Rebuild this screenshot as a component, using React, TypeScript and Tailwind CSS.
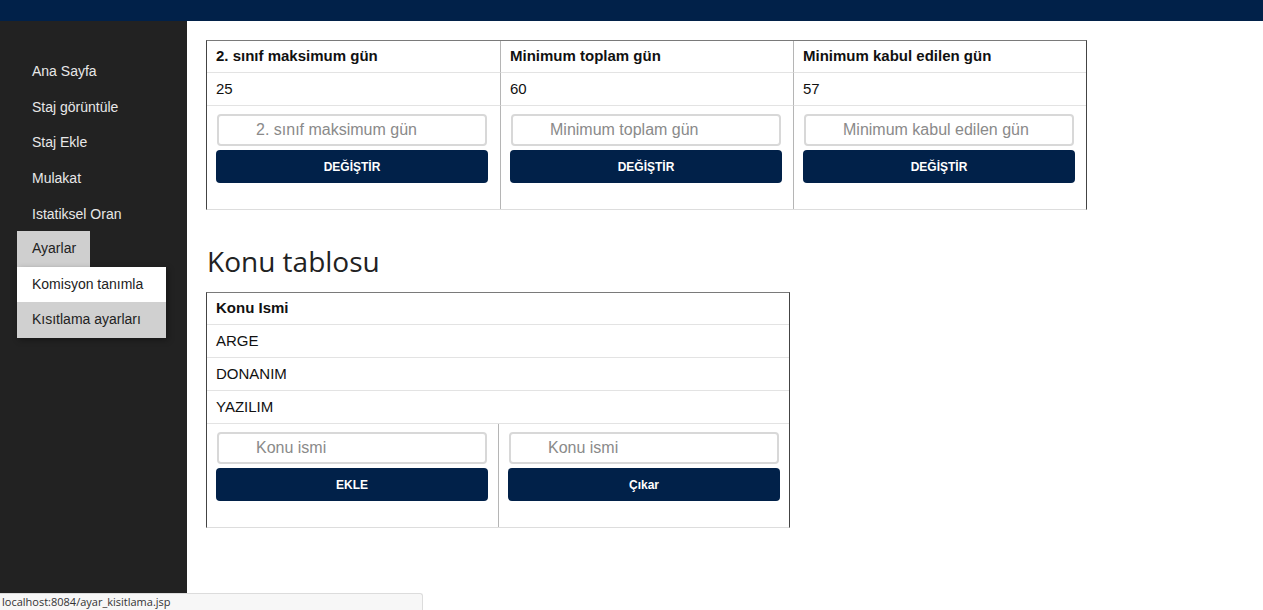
import React from 'react';

const menu = ['Ana Sayfa', 'Staj görüntüle', 'Staj Ekle', 'Mulakat', 'Istatiksel Oran'];

const limits = [
  { title: '2. sınıf maksimum gün', value: '25' },
  { title: 'Minimum toplam gün', value: '60' },
  { title: 'Minimum kabul edilen gün', value: '57' },
];

const topics = ['ARGE', 'DONANIM', 'YAZILIM'];

const FormCell = ({ placeholder, label, last }: { placeholder: string; label: string; last?: boolean }) => (
  <div className={`pl-[9px] pt-[8px] pb-[26px] ${last ? '' : 'border-r border-[#b5b5b5]'}`}>
    <input
      placeholder={placeholder}
      className="block w-[270px] h-[32px] ml-px border-2 border-[#d8d8d8] rounded-[4px] pl-[37px] font-['Liberation_Sans',Arial,sans-serif] text-[16px] text-[#333] placeholder:text-[#8a8a8a] outline-none"
    />
    <button className="mt-[4px] w-[272px] h-[33px] bg-[#012149] rounded-[4px] text-white font-['Liberation_Sans',Arial,sans-serif] text-[12px] font-bold">
      {label}
    </button>
  </div>
);

const App = () => {
  return (
    <div className="h-[610px] flex flex-col bg-white overflow-hidden relative font-['Liberation_Sans',Arial,sans-serif]">
      <div className="h-[21px] bg-[#012149] shrink-0" />

      <div className="flex flex-1">
        {/* Sidebar */}
        <aside className="w-[187px] bg-[#222222] pt-[33px] shrink-0">
          {menu.map((m) => (
            <div key={m} className="h-[35.6px] flex items-center pl-[32px] text-[14px] text-[#e8e8e8]">
              {m}
            </div>
          ))}
          <div className="ml-[17px] -mt-px">
            <div className="w-[73px] h-[36px] bg-[#cfcfcf] flex items-center pl-[15px] text-[14px] text-[#222]">Ayarlar</div>
            <div className="w-[149px] shadow-[2px_2px_6px_rgba(0,0,0,0.35)]">
              <div className="h-[35px] bg-white flex items-center pl-[15px] text-[14px] text-[#222]">Komisyon tanımla</div>
              <div className="h-[36px] bg-[#d0d0d0] flex items-center pl-[15px] text-[14px] text-[#222]">Kısıtlama ayarları</div>
            </div>
          </div>
        </aside>

        {/* Content */}
        <main className="flex-1 pl-[19px] pt-[19px]">
          <div className="w-[881px] border-t border-t-[#7a7a7a] border-x border-x-[#444] border-b border-b-[#ddd]">
            <div className="grid grid-cols-[294px_293px_1fr] text-[15px] text-[#111]">
              {limits.map((l, i) => (
                <div key={l.title} className={`h-[32px] flex items-center pl-[9px] font-bold border-b border-b-[#e3e3e3] ${i < 2 ? 'border-r border-r-[#b5b5b5]' : ''}`}>
                  {l.title}
                </div>
              ))}
              {limits.map((l, i) => (
                <div key={l.value} className={`h-[33px] flex items-center pl-[9px] border-b border-b-[#e3e3e3] ${i < 2 ? 'border-r border-r-[#b5b5b5]' : ''}`}>
                  {l.value}
                </div>
              ))}
              {limits.map((l, i) => (
                <FormCell key={l.title + 'f'} placeholder={l.title} label="DEĞİŞTİR" last={i === 2} />
              ))}
            </div>
          </div>

          <h2 className="mt-[33px] mb-[13px] text-[28px] leading-[36px] text-[#222] pl-px font-['Open_Sans','Noto_Sans',sans-serif]">
            Konu tablosu
          </h2>

          <div className="w-[584px] border-t border-t-[#7a7a7a] border-x border-x-[#444] border-b border-b-[#ddd] text-[15px] text-[#111]">
            <div className="h-[32px] flex items-center pl-[9px] font-bold border-b border-b-[#e3e3e3]">Konu Ismi</div>
            {topics.map((t) => (
              <div key={t} className="h-[33px] flex items-center pl-[9px] border-b border-b-[#e3e3e3]">{t}</div>
            ))}
            <div className="grid grid-cols-[292px_1fr]">
              <FormCell placeholder="Konu ismi" label="EKLE" />
              <FormCell placeholder="Konu ismi" label="Çıkar" last />
            </div>
          </div>
        </main>
      </div>

      <div className="absolute left-0 bottom-0 w-[423px] h-[17px] bg-[#f7f7f7] border-t border-r border-[#dcdcdc] rounded-tr-[3px] pl-[2px] text-[11px] leading-[16px] text-[#333] font-['Open_Sans','Noto_Sans',sans-serif]">
        localhost:8084/ayar_kisitlama.jsp
      </div>
    </div>
  );
};

export default App;
